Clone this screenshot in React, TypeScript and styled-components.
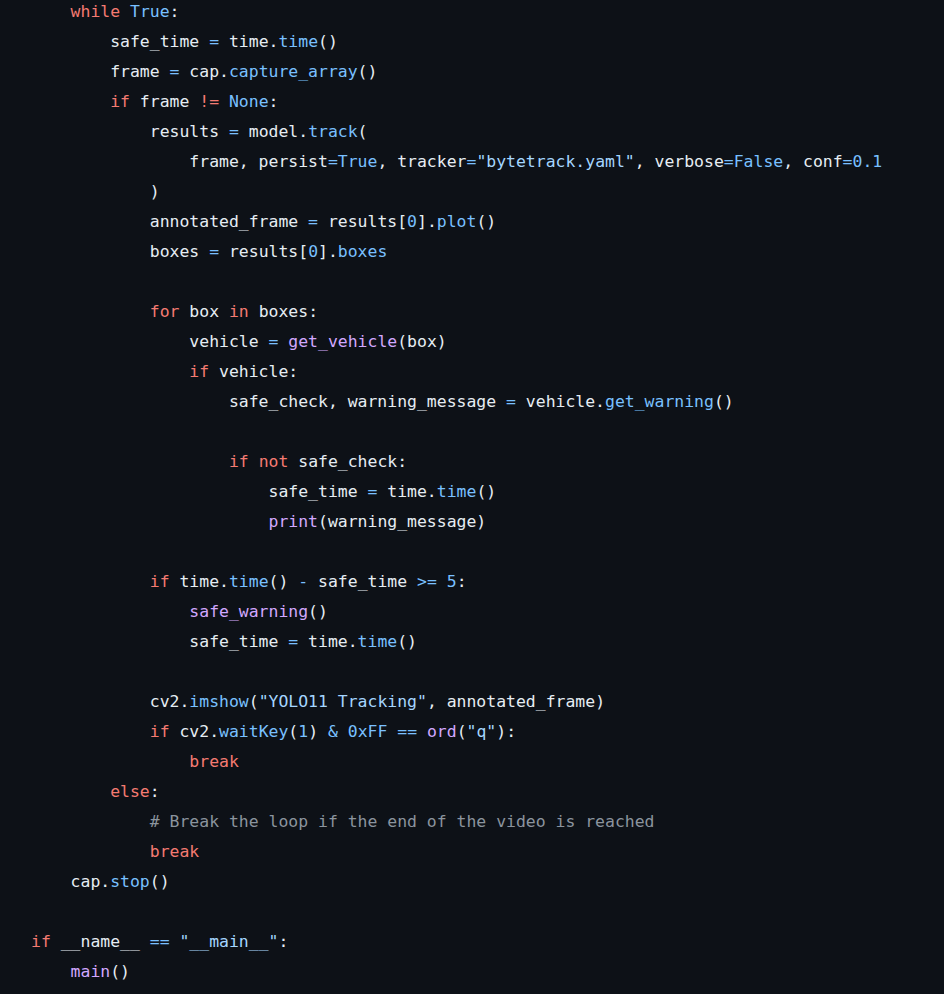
import React from "react";
import styled, { createGlobalStyle } from "styled-components";

const Global = createGlobalStyle`
  html, body {
    margin: 0;
    padding: 0;
    background: #0d1117;
  }
`;

type Kind = "k" | "b" | "s" | "f" | "c" | "t";

const colors: Record<Kind, string> = {
  k: "#f47b72",
  b: "#79c0ff",
  s: "#a5d6ff",
  f: "#d2a8ff",
  c: "#8b949e",
  t: "#e6edf3",
};

const CodeBlock = styled.pre`
  margin: -3px 0 0 0;
  padding: 0 0 0 31px;
  background: #0d1117;
  color: #e6edf3;
  font-family: "DejaVu Sans Mono", "Liberation Mono", monospace;
  font-size: 16.45px;
  line-height: 30px;
  min-height: 998px;
  box-sizing: border-box;
`;

const Line = styled.div`
  white-space: pre;
  height: 30px;
`;

const Tok = styled.span<{ $kind: Kind }>`
  color: ${(p) => colors[p.$kind]};
`;

const source = [
  "    @k{while} @b{True}:",
  "        safe_time @b{=} time.@b{time}()",
  "        frame @b{=} cap.@b{capture_array}()",
  "        @k{if} frame @k{!=} @b{None}:",
  "            results @b{=} model.@b{track}(",
  '                frame, persist@b{=}@b{True}, tracker@b{=}@s{"bytetrack.yaml"}, verbose@b{=}@b{False}, conf@b{=}@b{0.1}',
  "            )",
  "            annotated_frame @b{=} results[@b{0}].@b{plot}()",
  "            boxes @b{=} results[@b{0}].@b{boxes}",
  "",
  "            @k{for} box @k{in} boxes:",
  "                vehicle @b{=} @f{get_vehicle}(box)",
  "                @k{if} vehicle:",
  "                    safe_check, warning_message @b{=} vehicle.@b{get_warning}()",
  "",
  "                    @k{if} @k{not} safe_check:",
  "                        safe_time @b{=} time.@b{time}()",
  "                        @f{print}(warning_message)",
  "",
  "            @k{if} time.@b{time}() @b{-} safe_time @b{>=} @b{5}:",
  "                @f{safe_warning}()",
  "                safe_time @b{=} time.@b{time}()",
  "",
  '            cv2.@b{imshow}(@s{"YOLO11 Tracking"}, annotated_frame)',
  '            @k{if} cv2.@b{waitKey}(@b{1}) @b{&} @b{0xFF} @b{==} @f{ord}(@s{"q"}):',
  "                @k{break}",
  "        @k{else}:",
  "            @c{# Break the loop if the end of the video is reached}",
  "            @k{break}",
  "    cap.@b{stop}()",
  "",
  '@k{if} __name__ @b{==} @s{"__main__"}:',
  "    @f{main}()",
];

function parse(line: string): { kind: Kind; text: string }[] {
  const out: { kind: Kind; text: string }[] = [];
  const re = /@(\w)\{([^}]*)\}/g;
  let last = 0;
  let m: RegExpExecArray | null;
  while ((m = re.exec(line))) {
    if (m.index > last) out.push({ kind: "t", text: line.slice(last, m.index) });
    out.push({ kind: m[1] as Kind, text: m[2] });
    last = m.index + m[0].length;
  }
  if (last < line.length) out.push({ kind: "t", text: line.slice(last) });
  return out;
}

export default function App() {
  return (
    <>
      <Global />
      <CodeBlock>
        {source.map((line, i) => (
          <Line key={i}>
            {line === "" ? " " : parse(line).map((t, j) => (
              <Tok key={j} $kind={t.kind}>
                {t.text}
              </Tok>
            ))}
          </Line>
        ))}
      </CodeBlock>
    </>
  );
}
